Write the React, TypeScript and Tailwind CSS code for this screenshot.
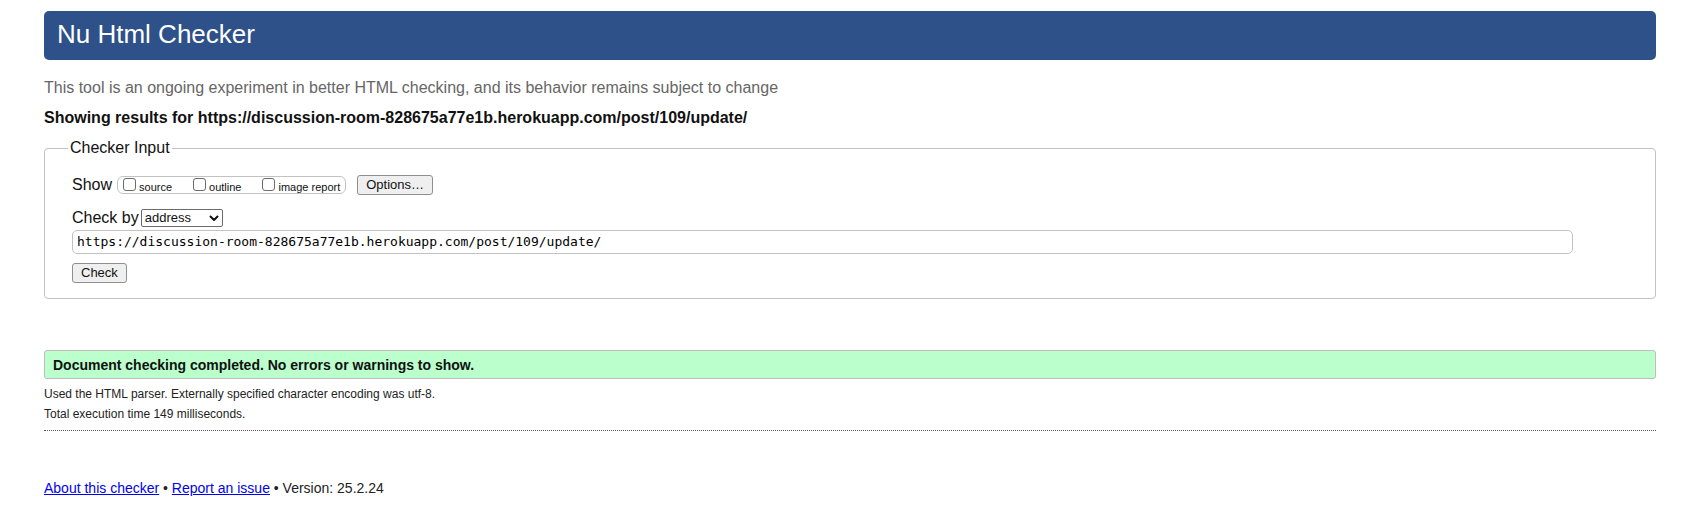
import React from 'react';

const url = 'https://discussion-room-828675a77e1b.herokuapp.com/post/109/update/';

const ShowOption = ({ label, first }: { label: string; first?: boolean }) => (
    <label className={`flex items-center ${first ? '' : 'ml-[21px]'}`}>
        <input
            type="checkbox"
            className="appearance-none w-[13px] h-[13px] rounded-[3px] border border-[#6b6b6b] bg-white mt-[-2px]"
        />
        <span className="ml-[3px] text-[11px] leading-[14px] mt-[3px]">{label}</span>
    </label>
);

export default function App() {
    return (
        <div className="min-h-[512px] bg-white text-[#111] font-['Liberation_Sans',Arial,sans-serif]">
            <div className="ml-[44px] w-[1612px] pt-[11px]">
                {/* Title bar */}
                <h1 className="h-[49px] pt-[8px] px-[13px] rounded-[5px] bg-[#2d5188] text-white text-[26px] leading-[30px] font-normal">
                    Nu Html Checker
                </h1>

                <p className="mt-[19px] text-[16px] leading-[18px] text-[#666]">
                    This tool is an ongoing experiment in better HTML checking, and its behavior remains subject to change
                </p>
                <p className="mt-[12px] text-[16px] leading-[18px] font-bold">
                    Showing results for {url}
                </p>

                {/* Checker input */}
                <fieldset className="mt-[12px] border border-[#c2c2c2] rounded-[4px] pl-[27px] pb-[15px]">
                    <legend className="ml-[-4px] px-[2px] text-[16px] leading-[18px]">Checker Input</legend>
                    <div className="pt-[18px]">
                        <div className="flex items-center h-[20px]">
                            <span className="text-[16px] leading-[18px]">Show</span>
                            <div className="ml-[5px] flex items-center h-[18px] px-[5px] border border-[#c2c2c2] rounded-[6px]">
                                <ShowOption label="source" first />
                                <ShowOption label="outline" />
                                <ShowOption label="image report" />
                            </div>
                            <button className="ml-[11px] h-[20px] px-[8px] text-[13px] leading-[16px] bg-[#efefef] border border-[#8f8f8f] rounded-[3px]">
                                Options…
                            </button>
                        </div>

                        <div className="mt-[14px] flex items-center h-[18px]">
                            <span className="text-[16px] leading-[18px]">Check by</span>
                            <div className="ml-[2px] relative w-[82px] h-[18px] border border-[#6b6b6b] rounded-[2px] bg-white flex items-center">
                                <span className="pl-[3px] text-[13px] leading-[16px]">address</span>
                                <svg className="absolute right-[3px] top-[5px]" width="10" height="7" viewBox="0 0 10 7">
                                    <path d="M1.5 1.5 L5 5 L8.5 1.5" fill="none" stroke="#111" strokeWidth="2" strokeLinecap="round" strokeLinejoin="round" />
                                </svg>
                            </div>
                        </div>

                        <div className="mt-[3px] w-[1501px] h-[24px] border border-[#c2c2c2] rounded-[5px] flex items-center pl-[4px]">
                            <span className="font-['DejaVu_Sans_Mono',monospace] text-[13px] leading-[16px] text-black">{url}</span>
                        </div>

                        <button className="mt-[9px] h-[20px] px-[8px] text-[13px] leading-[16px] bg-[#efefef] border border-[#8f8f8f] rounded-[3px] block">
                            Check
                        </button>
                    </div>
                </fieldset>

                {/* Result */}
                <div className="mt-[51px] h-[29px] flex items-center pl-[8px] bg-[#bfc] border border-[#bdbdbd] rounded-[3px]">
                    <span className="text-[14px] leading-[16px] font-bold">
                        Document checking completed. No errors or warnings to show.
                    </span>
                </div>

                <div className="mt-[5px] text-[12px] leading-[20px] text-[#222]">
                    <p>Used the HTML parser. Externally specified character encoding was utf-8.</p>
                    <p>Total execution time 149 milliseconds.</p>
                </div>

                <div className="mt-[6px] border-t border-dotted border-[#555]" />

                <p className="mt-[47px] text-[14px] leading-[20px] text-[#222]">
                    <a href="#" className="text-[#0000ee] underline">About this checker</a>
                    {' • '}
                    <a href="#" className="text-[#0000ee] underline">Report an issue</a>
                    {' • Version: 25.2.24'}
                </p>
            </div>
        </div>
    );
}
